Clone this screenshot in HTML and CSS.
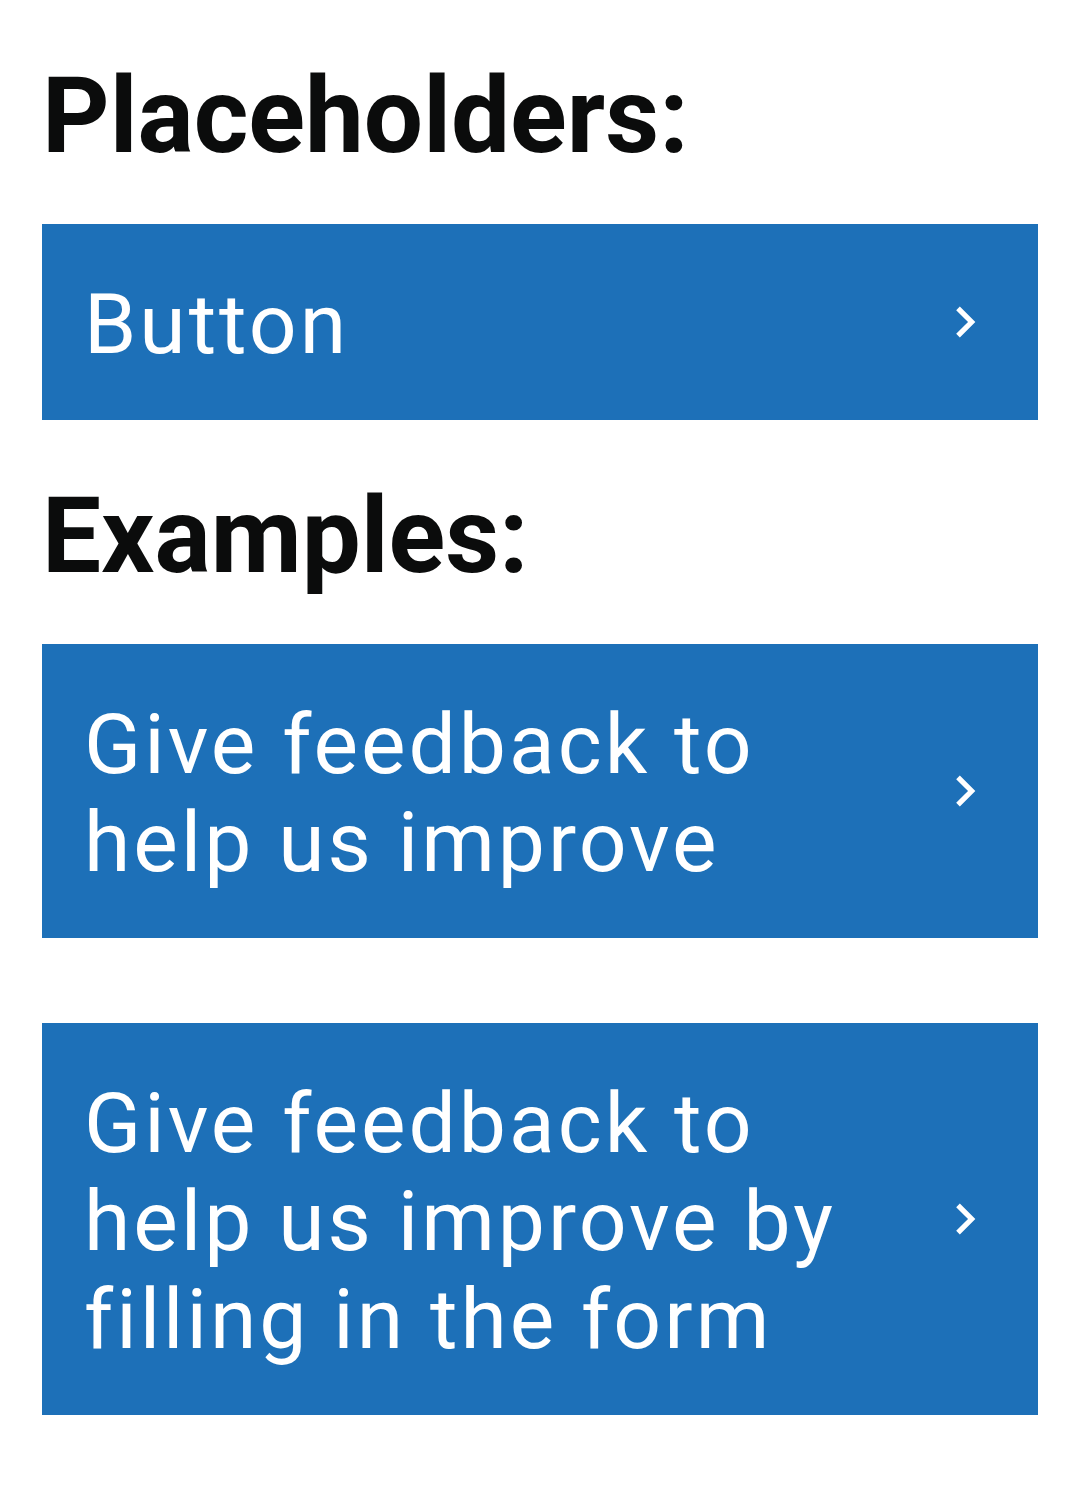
FILE: index.html
```html
<!DOCTYPE html>
<html lang="en">
<head>
<meta charset="utf-8">
<title>Buttons</title>
<link rel="stylesheet" href="styles.css">
</head>
<body>
<main class="page">
  <h2 class="heading">Placeholders:</h2>
  <a class="nav-button" href="#">
    <span class="nav-button__text">Button</span>
    <svg class="nav-button__icon" viewBox="0 0 24 24" aria-hidden="true"><path d="M10 6L8.59 7.41 13.17 12l-4.58 4.59L10 18l6-6z"/></svg>
  </a>
  <h2 class="heading">Examples:</h2>
  <a class="nav-button" href="#">
    <span class="nav-button__text">Give feedback to help us improve</span>
    <svg class="nav-button__icon" viewBox="0 0 24 24" aria-hidden="true"><path d="M10 6L8.59 7.41 13.17 12l-4.58 4.59L10 18l6-6z"/></svg>
  </a>
  <a class="nav-button nav-button--spaced" href="#">
    <span class="nav-button__text">Give feedback to help us improve by filling in the form</span>
    <svg class="nav-button__icon" viewBox="0 0 24 24" aria-hidden="true"><path d="M10 6L8.59 7.41 13.17 12l-4.58 4.59L10 18l6-6z"/></svg>
  </a>
</main>
</body>
</html>
```

FILE: styles.css
```css
html, body {
  margin: 0;
  padding: 0;
  background: #ffffff;
}

body {
  font-family: Roboto, "Liberation Sans", Arial, sans-serif;
  color: #0b0c0c;
}

.page {
  padding: 0 42px;
  display: flex;
  flex-direction: column;
}

.heading {
  margin: 54px 0 44px;
  font-size: 105px;
  line-height: 126px;
  font-weight: 700;
  letter-spacing: 0;
}

.nav-button {
  display: flex;
  align-items: center;
  background: #1d70b8;
  color: #ffffff;
  text-decoration: none;
  padding: 52px 42px 46px 42px;
}

.nav-button--spaced {
  margin-top: 85px;
}

.nav-button__text {
  flex: 1 1 auto;
  max-width: 756px;
  margin-right: auto;
  font-size: 84px;
  line-height: 98px;
  font-weight: 400;
  letter-spacing: 3px;
}

.nav-button__icon {
  flex: 0 0 62px;
  width: 62px;
  height: 62px;
  margin-top: -6px;
  fill: #ffffff;
}
```
